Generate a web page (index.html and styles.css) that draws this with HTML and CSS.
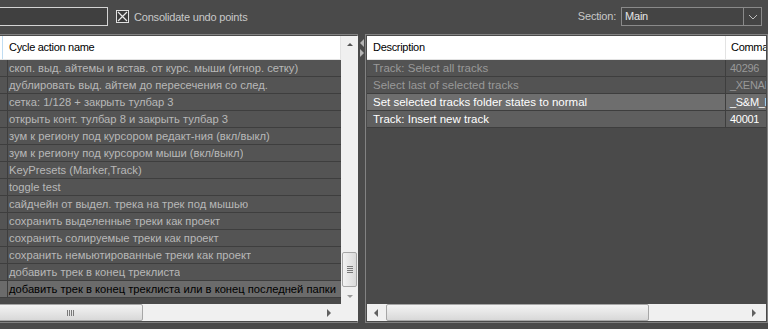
FILE: index.html
```html
<!DOCTYPE html>
<html>
<head>
<meta charset="utf-8">
<link rel="stylesheet" href="styles.css">
</head>
<body>
<div class="topbar">
  <div class="search"></div>
  <label class="check">
    <span class="box"><svg width="11" height="11" viewBox="0 0 11 11"><path d="M1 1L10 10M10 1L1 10" stroke="#e8e8e8" stroke-width="1.2"/></svg></span>
    <span>Consolidate undo points</span>
  </label>
  <div class="spacer"></div>
  <span class="sect-label">Section:</span>
  <div class="combo">
    <span class="combo-text">Main</span>
    <span class="combo-btn"><svg width="10" height="6" viewBox="0 0 10 6"><path d="M1 1L5 5L9 1" fill="none" stroke="#bdbdbd" stroke-width="1"/></svg></span>
  </div>
</div>

<div class="main">
  <div class="panel left">
    <div class="grid">
      <div class="content">
        <div class="header">
          <span class="hcell first"></span>
          <span class="hcell name">Cycle action name</span>
        </div>
        <div class="rows">
          <div class="row"><span class="c0"></span><span class="c1">скоп. выд. айтемы и встав. от курс. мыши (игнор. сетку)</span></div>
          <div class="row"><span class="c0"></span><span class="c1">дублировать выд. айтем до пересечения со след.</span></div>
          <div class="row"><span class="c0"></span><span class="c1">сетка: 1/128 + закрыть тулбар 3</span></div>
          <div class="row"><span class="c0"></span><span class="c1">открыть конт. тулбар 8 и закрыть тулбар 3</span></div>
          <div class="row"><span class="c0"></span><span class="c1">зум к региону под курсором редакт-ния (вкл/выкл)</span></div>
          <div class="row"><span class="c0"></span><span class="c1">зум к региону под курсором мыши (вкл/выкл)</span></div>
          <div class="row"><span class="c0"></span><span class="c1">KeyPresets (Marker,Track)</span></div>
          <div class="row"><span class="c0"></span><span class="c1">toggle test</span></div>
          <div class="row"><span class="c0"></span><span class="c1">сайдчейн от выдел. трека на трек под мышью</span></div>
          <div class="row"><span class="c0"></span><span class="c1">сохранить выделенные треки как проект</span></div>
          <div class="row"><span class="c0"></span><span class="c1">сохранить солируемые треки как проект</span></div>
          <div class="row"><span class="c0"></span><span class="c1">сохранить немьютированные треки как проект</span></div>
          <div class="row"><span class="c0"></span><span class="c1">добавить трек в конец треклиста</span></div>
          <div class="row sel"><span class="c0"></span><span class="c1">добавить трек в конец треклиста или в конец последней папки</span></div>
        </div>
      </div>
      <div class="vscroll">
        <span class="arr up"></span>
        <div class="vtrack"><div class="vthumb"><span class="grip-h"></span></div></div>
        <span class="arr down"></span>
      </div>
      <div class="hscroll">
        <div class="hthumb lt"><span class="grip-v"></span></div>
        <div class="hfill"></div>
        <span class="arr right"></span>
      </div>
      <div class="corner"></div>
    </div>
  </div>

  <div class="splitter">
    <span class="tri tl"></span>
    <span class="tri tr"></span>
  </div>

  <div class="panel right">
    <div class="rcontent">
      <div class="header">
        <span class="hcell desc">Description</span>
        <span class="hcell cmd">Comma</span>
      </div>
      <div class="rows">
        <div class="row dim"><span class="d">Track: Select all tracks</span><span class="k">40296</span></div>
        <div class="row dim"><span class="d">Select last of selected tracks</span><span class="k">_XENAK</span></div>
        <div class="row hi"><span class="d">Set selected tracks folder states to normal</span><span class="k">_S&amp;M_F</span></div>
        <div class="row hi2"><span class="d">Track: Insert new track</span><span class="k">40001</span></div>
      </div>
    </div>
    <div class="hscroll rh">
      <span class="arr left"></span>
      <div class="hthumb rt"></div>
      <div class="hfill"></div>
      <span class="arr right"></span>
    </div>
  </div>
</div>
</body>
</html>
```
FILE: styles.css
```css
* { box-sizing: border-box; }
html, body { margin: 0; padding: 0; }
body {
  width: 768px;
  height: 329px;
  overflow: hidden;
  background: #4a4a4a;
  font-family: "Liberation Sans", Arial, sans-serif;
  font-size: 11px;
  color: #c4c4c4;
}
.topbar {
  height: 34px;
  display: flex;
  align-items: flex-start;
  padding-top: 7px;
}
.search {
  width: 110px;
  height: 19px;
  margin-left: -2px;
  border: 1px solid #d4d4d4;
  background: #404040;
}
.check {
  display: flex;
  align-items: center;
  margin-left: 8px;
  height: 19px;
  gap: 5px;
  font-size: 11px;
  letter-spacing: -0.2px;
  color: #c8c8c8;
}
.box {
  width: 13px;
  height: 13px;
  border: 1px solid #e0e0e0;
  background: #3a3a3a;
  display: flex;
  align-items: center;
  justify-content: center;
}
.box svg { display: block; }
.spacer { flex: 1; }
.sect-label {
  height: 19px;
  line-height: 19px;
  margin-right: 5px;
  font-size: 11px;
  letter-spacing: -0.2px;
  color: #c8c8c8;
}
.combo {
  width: 141px;
  height: 19px;
  margin-right: 6px;
  border: 1px solid #8a8a8a;
  background: #444;
  display: flex;
}
.combo-text {
  flex: 1;
  padding-left: 3px;
  line-height: 17px;
  font-size: 11px;
  letter-spacing: -0.2px;
  color: #e4e4e4;
}
.combo-btn {
  width: 18px;
  border-left: 1px solid #8a8a8a;
  display: flex;
  align-items: center;
  justify-content: center;
}
.main {
  display: flex;
  height: 295px;
}
.panel {
  border: 1px solid #828282;
  padding: 1px;
  height: 289px;
}
.panel.left {
  width: 360px;
  margin-left: -2px;
}
.grid {
  display: grid;
  grid-template-columns: 341px 17px;
  grid-template-rows: 268px 17px;
  height: 285px;
  background: #4a4a4a;
}
.content { overflow: hidden; }
.header {
  height: 24px;
  background: #fff;
  border-bottom: 1px solid #e3e3e3;
  display: flex;
  color: #000;
  font-size: 11px;
  letter-spacing: -0.3px;
}
.hcell {
  line-height: 23px;
  white-space: nowrap;
}
.hcell.first {
  width: 3px;
  border-right: 1px solid #bfdcf2;
}
.hcell.name {
  flex: 1;
  padding-left: 6px;
  border-right: 1px solid #e3e3e3;
}
.row {
  height: 17px;
  background: #545454;
  border-bottom: 1px solid #3e3e3e;
  display: flex;
  white-space: nowrap;
  color: #b8b8b8;
  font-size: 11.5px;
  line-height: 17px;
}
.left .row { font-size: 11.2px; }
.row .c0 {
  width: 8px;
  flex: none;
  border-right: 1px solid #3e3e3e;
}
.row .c1 {
  padding-left: 1px;
  overflow: hidden;
}
.row.sel { background: #6b6b6b; color: #000; }
.vscroll {
  background: #f0f0f0;
  display: flex;
  flex-direction: column;
  align-items: center;
}
.vtrack {
  flex: 1;
  width: 100%;
  display: flex;
  flex-direction: column;
  justify-content: flex-end;
  padding-bottom: 7px;
}
.vthumb {
  height: 35px;
  margin: 0 1px;
  border: 1px solid #a6a6a6;
  border-radius: 2px;
  background: linear-gradient(to right, #f3f3f3, #dadada);
  display: flex;
  align-items: center;
  justify-content: center;
}
.grip-h {
  width: 6px;
  height: 7px;
  background: repeating-linear-gradient(to bottom, #7a7a7a 0 1px, transparent 1px 2px);
}
.arr {
  width: 0;
  height: 0;
  flex: none;
}
.arr.up {
  margin-top: 7px;
  margin-bottom: 6px;
  border-left: 3px solid transparent;
  border-right: 3px solid transparent;
  border-bottom: 3px solid #555;
}
.arr.down {
  margin-bottom: 6px;
  margin-top: 1px;
  border-left: 3px solid transparent;
  border-right: 3px solid transparent;
  border-top: 3px solid #999;
}
.arr.right {
  margin: 0 10px 0 8px;
  border-top: 4px solid transparent;
  border-bottom: 4px solid transparent;
  border-left: 4px solid #606060;
}
.arr.left {
  margin: 0 7px 0 8px;
  border-top: 4px solid transparent;
  border-bottom: 4px solid transparent;
  border-right: 4px solid #606060;
}
.hscroll {
  background: #f0f0f0;
  display: flex;
  align-items: center;
  height: 17px;
}
.hthumb {
  height: 17px;
  border: 1px solid #a6a6a6;
  border-radius: 2px;
  background: linear-gradient(to bottom, #f4f4f4, #d8d8d8);
  display: flex;
  align-items: center;
  justify-content: center;
}
.hthumb.lt { width: 145px; margin-left: -2px; }
.hthumb.rt { width: 263px; }
.grip-v {
  width: 7px;
  height: 6px;
  background: repeating-linear-gradient(to right, #7a7a7a 0 1px, transparent 1px 2px);
}
.hfill { flex: 1; }
.corner { background: #f0f0f0; }
.splitter {
  width: 7px;
  display: flex;
  flex-direction: column;
  align-items: center;
  padding-top: 5px;
  gap: 2px;
}
.tri { width: 0; height: 0; }
.tri.tl {
  border-top: 4px solid transparent;
  border-bottom: 4px solid transparent;
  border-right: 4px solid #b4b4b4;
}
.tri.tr {
  border-top: 4px solid transparent;
  border-bottom: 4px solid transparent;
  border-left: 4px solid #b4b4b4;
}
.panel.right {
  width: 403px;
  display: flex;
  flex-direction: column;
}
.rcontent { flex: 1; overflow: hidden; }
.hcell.desc {
  width: 359px;
  flex: none;
  padding-left: 6px;
  border-right: 1px solid #e3e3e3;
}
.hcell.cmd { padding-left: 5px; }
.row .d {
  width: 359px;
  flex: none;
  padding-left: 6px;
  border-right: 1px solid #3e3e3e;
}
.row .k {
  padding-left: 4px;
  overflow: hidden;
  font-size: 11px;
  letter-spacing: -0.3px;
}
.row.dim { color: #999; background: #535353; }
.row.hi { background: #6e6e6e; color: #fff; }
.row.hi2 { background: #5f5f5f; color: #fff; }
.rh .arr.left { margin: 0 8px 0 7px; }
.rh .arr.right { margin: 0 10px 0 8px; }
```
